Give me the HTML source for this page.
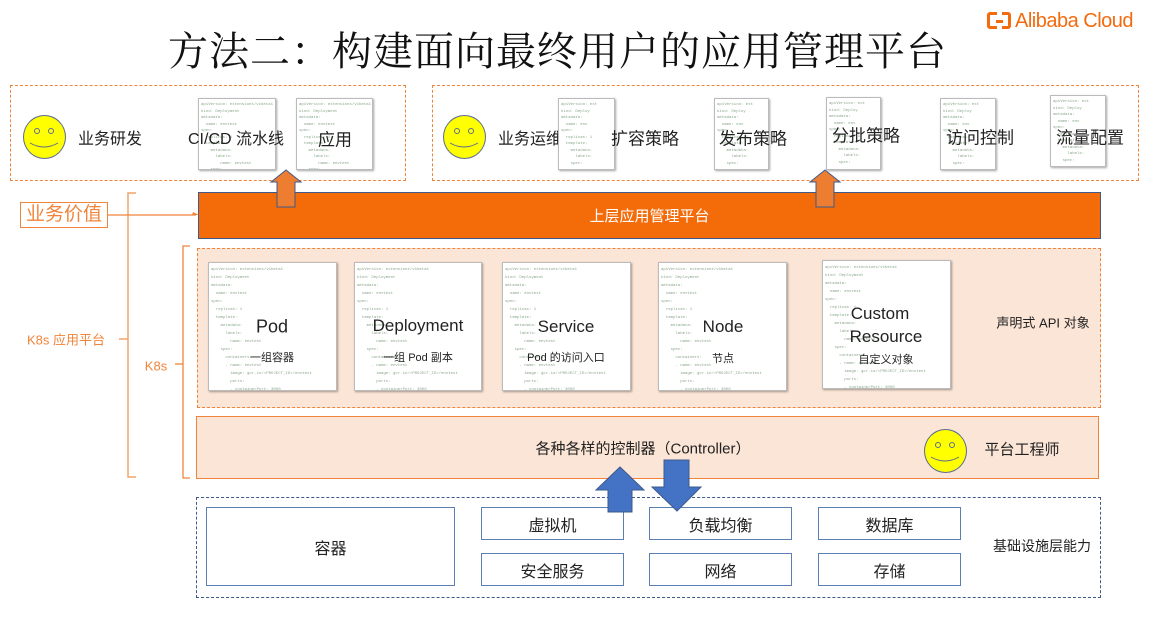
<!DOCTYPE html>
<html><head><meta charset="utf-8">
<style>
*{margin:0;padding:0;box-sizing:border-box}
body{width:1154px;height:629px;background:#fff;position:relative;overflow:hidden;font-family:"Liberation Sans","Noto Sans CJK SC",sans-serif;color:#222}
.a{position:absolute}
.card{position:absolute;background:#fff;border:1px solid #bbb;box-shadow:1px 1px 2px rgba(0,0,0,.35);overflow:hidden;padding:3px 2px;font-family:"Liberation Mono",monospace;font-size:4px;line-height:6.5px;color:#8aa88a;white-space:pre}
.lbl{position:absolute;white-space:nowrap;transform:translate(-50%,-50%)}
.sm{position:absolute;border-radius:50%;background:#ffff00;border:1px solid #5b6c8f}
.box{position:absolute;border:1px solid #5b7fb5;background:#fff;display:flex;align-items:center;justify-content:center;font-size:16px}
</style></head><body>

<div class="a" style="left:168px;top:20px;font-family:'Noto Serif CJK SC',serif;font-size:40px;letter-spacing:1px;color:#111">方法二：构建面向最终用户的应用管理平台</div>
<div class="a" style="left:987px;top:10px;color:#f26b0f;font-size:20px;letter-spacing:-0.5px"><span style="display:inline-block;border:3px solid #f26b0f;border-radius:3px;width:24px;height:17px;position:relative;vertical-align:-2px;margin-right:4px"><span style="position:absolute;left:7px;top:-3px;width:5px;height:20px;background:#fff"></span><span style="position:absolute;left:6px;top:5px;width:7px;height:3px;background:#f26b0f"></span></span>Alibaba Cloud</div>

<div class="a" style="left:10px;top:85px;width:396px;height:96px;border:1.5px dashed #f0843a"></div>
<div class="a" style="left:432px;top:85px;width:707px;height:96px;border:1.5px dashed #f0843a"></div>

<div class="lbl" style="left:110px;top:137px;font-size:16px">业务研发</div>
<div class="lbl" style="left:530px;top:137px;font-size:16px">业务运维</div>

<div class="card" style="left:198px;top:98px;width:78px;height:72px">apiVersion: extensions/v1beta1
kind: Deployment
metadata:
  name: envtest
spec:
  replicas: 1
  template:
    metadata:
      labels:
        name: envtest
    spec:</div>
<div class="card" style="left:296px;top:98px;width:77px;height:72px">apiVersion: extensions/v1beta1
kind: Deployment
metadata:
  name: envtest
spec:
  replicas: 1
  template:
    metadata:
      labels:
        name: envtest
    spec:</div>
<div class="lbl" style="left:236px;top:137px;font-size:16px">CI/CD 流水线</div>
<div class="lbl" style="left:335px;top:138px;font-size:17px">应用</div>

<div class="card" style="left:558px;top:98px;width:57px;height:72px">apiVersion: ext
kind: Deploy
metadata:
  name: env
spec:
  replicas: 1
  template:
    metadata:
      labels:
    spec:</div>
<div class="card" style="left:714px;top:98px;width:55px;height:72px">apiVersion: ext
kind: Deploy
metadata:
  name: env
spec:
  replicas: 1
  template:
    metadata:
      labels:
    spec:</div>
<div class="card" style="left:826px;top:97px;width:55px;height:73px">apiVersion: ext
kind: Deploy
metadata:
  name: env
spec:
  replicas: 1
  template:
    metadata:
      labels:
    spec:</div>
<div class="card" style="left:940px;top:98px;width:56px;height:72px">apiVersion: ext
kind: Deploy
metadata:
  name: env
spec:
  replicas: 1
  template:
    metadata:
      labels:
    spec:</div>
<div class="card" style="left:1050px;top:95px;width:56px;height:72px">apiVersion: ext
kind: Deploy
metadata:
  name: env
spec:
  replicas: 1
  template:
    metadata:
      labels:
    spec:</div>
<div class="lbl" style="left:645px;top:137px;font-size:17px">扩容策略</div>
<div class="lbl" style="left:753px;top:137px;font-size:17px">发布策略</div>
<div class="lbl" style="left:866px;top:134px;font-size:17px">分批策略</div>
<div class="lbl" style="left:980px;top:136px;font-size:17px">访问控制</div>
<div class="lbl" style="left:1090px;top:136px;font-size:17px">流量配置</div>

<div class="a" style="left:198px;top:192px;width:903px;height:47px;background:#f46c0a;border:1px solid #3e5a8a;color:#fff;font-size:15px;display:flex;align-items:center;justify-content:center">上层应用管理平台</div>

<div class="a" style="left:20px;top:202px;width:88px;height:26px;border:1.5px solid #f0843a;color:#f0843a;font-size:19px;line-height:23px;text-align:center">业务价值</div>

<div class="a" style="left:197px;top:248px;width:904px;height:160px;background:#fbe5d6;border:1.5px dashed #f0843a"></div>
<div class="a" style="left:196px;top:416px;width:903px;height:63px;background:#fbe5d6;border:1.5px solid #f0843a"></div>

<div class="card" style="left:208px;top:262px;width:129px;height:129px;line-height:8px">apiVersion: extensions/v1beta1
kind: Deployment
metadata:
  name: envtest
spec:
  replicas: 1
  template:
    metadata:
      labels:
        name: envtest
    spec:
      containers:
      - name: envtest
        image: gcr.io/&lt;PROJECT_ID&gt;/envtest
        ports:
        - containerPort: 3000</div>
<div class="card" style="left:354px;top:262px;width:128px;height:129px;line-height:8px">apiVersion: extensions/v1beta1
kind: Deployment
metadata:
  name: envtest
spec:
  replicas: 1
  template:
    metadata:
      labels:
        name: envtest
    spec:
      containers:
      - name: envtest
        image: gcr.io/&lt;PROJECT_ID&gt;/envtest
        ports:
        - containerPort: 3000</div>
<div class="card" style="left:502px;top:262px;width:129px;height:129px;line-height:8px">apiVersion: extensions/v1beta1
kind: Deployment
metadata:
  name: envtest
spec:
  replicas: 1
  template:
    metadata:
      labels:
        name: envtest
    spec:
      containers:
      - name: envtest
        image: gcr.io/&lt;PROJECT_ID&gt;/envtest
        ports:
        - containerPort: 3000</div>
<div class="card" style="left:658px;top:262px;width:129px;height:129px;line-height:8px">apiVersion: extensions/v1beta1
kind: Deployment
metadata:
  name: envtest
spec:
  replicas: 1
  template:
    metadata:
      labels:
        name: envtest
    spec:
      containers:
      - name: envtest
        image: gcr.io/&lt;PROJECT_ID&gt;/envtest
        ports:
        - containerPort: 3000</div>
<div class="card" style="left:822px;top:260px;width:129px;height:129px;line-height:8px">apiVersion: extensions/v1beta1
kind: Deployment
metadata:
  name: envtest
spec:
  replicas: 1
  template:
    metadata:
      labels:
        name: envtest
    spec:
      containers:
      - name: envtest
        image: gcr.io/&lt;PROJECT_ID&gt;/envtest
        ports:
        - containerPort: 3000</div>

<div class="lbl" style="left:272px;top:327px;font-size:18px">Pod</div>
<div class="lbl" style="left:272px;top:357px;font-size:11px">一组容器</div>
<div class="lbl" style="left:418px;top:326px;font-size:17px">Deployment</div>
<div class="lbl" style="left:418px;top:357px;font-size:11px">一组 Pod 副本</div>
<div class="lbl" style="left:566px;top:327px;font-size:17px">Service</div>
<div class="lbl" style="left:566px;top:357px;font-size:11px">Pod 的访问入口</div>
<div class="lbl" style="left:723px;top:327px;font-size:17px">Node</div>
<div class="lbl" style="left:723px;top:358px;font-size:11px">节点</div>
<div class="lbl" style="left:880px;top:314px;font-size:17px">Custom</div>
<div class="lbl" style="left:886px;top:337px;font-size:17px">Resource</div>
<div class="lbl" style="left:886px;top:359px;font-size:11px">自定义对象</div>
<div class="lbl" style="left:1043px;top:322px;font-size:13px">声明式 API 对象</div>

<div class="lbl" style="left:643px;top:448px;font-size:15px">各种各样的控制器（Controller）</div>
<div class="lbl" style="left:1022px;top:449px;font-size:15px">平台工程师</div>

<div class="a" style="left:196px;top:497px;width:905px;height:101px;border:1px dashed #3e5a8a"></div>
<div class="box" style="left:206px;top:507px;width:249px;height:79px">容器</div>
<div class="box" style="left:481px;top:507px;width:143px;height:33px">虚拟机</div>
<div class="box" style="left:481px;top:553px;width:143px;height:33px">安全服务</div>
<div class="box" style="left:649px;top:507px;width:143px;height:33px">负载均衡</div>
<div class="box" style="left:649px;top:553px;width:143px;height:33px">网络</div>
<div class="box" style="left:818px;top:507px;width:143px;height:33px">数据库</div>
<div class="box" style="left:818px;top:553px;width:143px;height:33px">存储</div>
<div class="lbl" style="left:1042px;top:546px;font-size:14px">基础设施层能力</div>

<div class="lbl" style="left:66px;top:339px;font-size:13px;color:#f0843a">K8s 应用平台</div>
<div class="lbl" style="left:156px;top:366px;font-size:13px;color:#f0843a">K8s</div>

<div class="sm" style="left:23px;top:115px;width:43px;height:44px"></div>
<div class="sm" style="left:443px;top:115px;width:43px;height:44px"></div>
<div class="sm" style="left:924px;top:429px;width:43px;height:44px"></div>

<svg class="a" style="left:0;top:0" width="1154" height="629">
<g fill="none" stroke="#5b6c8f" stroke-width="1">
<circle cx="37" cy="131" r="2.5"/><circle cx="51" cy="131" r="2.5"/><path d="M30 143 Q44 151 58 143"/>
<circle cx="457" cy="131" r="2.5"/><circle cx="471" cy="131" r="2.5"/><path d="M450 143 Q464 151 478 143"/>
<circle cx="938" cy="445" r="2.5"/><circle cx="952" cy="445" r="2.5"/><path d="M931 457 Q945 465 959 457"/>
</g>
<g fill="none" stroke="#f4a46a" stroke-width="1.5">
<path d="M136 193 H128 V477 H136"/><path d="M119 339 H128"/>
</g>
<g fill="none" stroke="#f0843a" stroke-width="1.3">
<path d="M190 246 H183 V478 H190"/><path d="M175 364 H183"/>
<path d="M108 215 H196"/>
</g>
<path d="M192 215 L199 215 L193 212 Z" fill="#f0843a"/>
<g fill="#ed7d31" stroke="#3e5a8a" stroke-width="1">
<path d="M277 207 V182 H271 L286 170 L301 182 H295 V207 Z"/>
<path d="M816 207 V182 H810 L825 170 L840 182 H834 V207 Z"/>
</g>
<g fill="#4472c4" stroke="#3e5a8a" stroke-width="1">
<path d="M608 512 V490 H596 L620 467 L644 490 H632 V512 Z"/>
<path d="M664 460 V487 H652 L677 511 L701 487 H689 V460 Z"/>
</g>
</svg>
</body></html>
